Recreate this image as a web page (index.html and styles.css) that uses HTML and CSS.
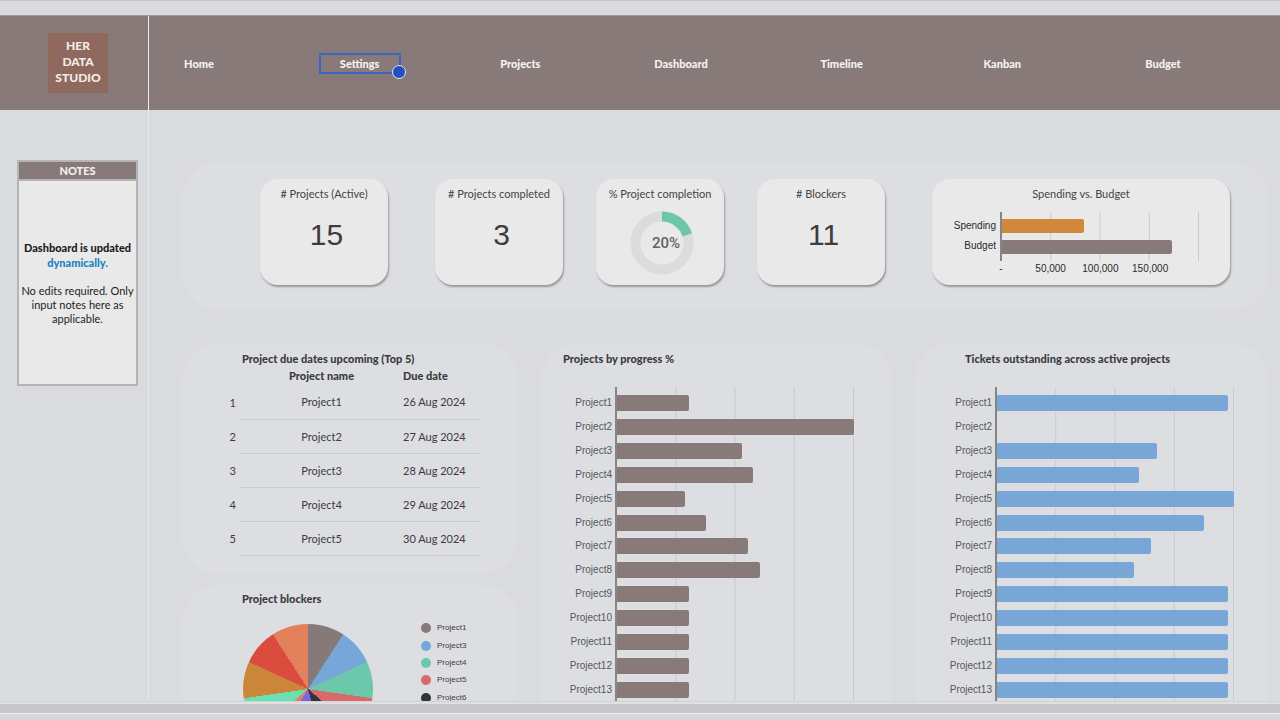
FILE: index.html
```html
<!DOCTYPE html>
<html lang="en">
<head>
<meta charset="utf-8">
<title>Project dashboard</title>
<meta name="viewport" content="width=device-width, initial-scale=1">
<link rel="stylesheet" href="styles.css">
</head>
<body>
<div class="sheet">
  <header class="header">
    <div class="brand"><div class="logo">HER<br>DATA<br>STUDIO</div></div>
    <nav class="nav">
      <a href="#">Home</a>
      <a href="#" class="selected">Settings</a>
      <a href="#">Projects</a>
      <a href="#">Dashboard</a>
      <a href="#">Timeline</a>
      <a href="#">Kanban</a>
      <a href="#">Budget</a>
    </nav>
  </header>
  <div class="page">
    <aside class="sidebar">
      <section class="notes">
        <h2 class="notes-title">NOTES</h2>
        <div class="notes-body">
          <p class="notes-lead">Dashboard is updated <span class="accent">dynamically.</span></p>
          <p>No edits required. Only input notes here as applicable.</p>
        </div>
      </section>
    </aside>
    <main class="content">
      <section class="panel kpis">
        <article class="card"><h3># Projects (Active)</h3><p class="figure">15</p></article>
        <article class="card spaced"><h3># Projects completed</h3><p class="figure">3</p></article>
        <article class="card">
          <h3>% Project completion</h3>
          <svg class="donut" viewBox="0 0 64 64" role="img" aria-label="20% complete">
            <circle cx="32" cy="32" r="26.5" fill="none" stroke="#dcdcdc" stroke-width="10"/>
            <circle cx="32" cy="32" r="26.5" fill="none" stroke="#6cc7a8" stroke-width="10" pathLength="100" stroke-dasharray="20 80" transform="rotate(-90 32 32)"/>
            <text x="36" y="37" text-anchor="middle" class="donut-label">20%</text>
          </svg>
        </article>
        <article class="card"><h3># Blockers</h3><p class="figure">11</p></article>
        <article class="card wide spaced">
          <h3>Spending vs. Budget</h3>
          <div class="spend">
            <div class="spend-labels"><span>Spending</span><span>Budget</span></div>
            <div class="spend-plot">
              <div class="bar ochre" style="width:41.4%"></div>
              <div class="bar" style="width:86.4%"></div>
            </div>
            <div class="spend-ticks"><span>-</span><span>50,000</span><span>100,000</span><span>150,000</span></div>
          </div>
        </article>
      </section>
      <div class="columns">
        <div class="stack">
          <section class="panel due">
            <h2 class="title">Project due dates upcoming (Top 5)</h2>
            <table class="due-table">
              <thead><tr><th class="num"></th><th class="name">Project name</th><th class="date">Due date</th></tr></thead>
              <tbody>
                <tr><td class="num">1</td><td class="name">Project1</td><td class="date">26 Aug 2024</td></tr>
                <tr><td class="num">2</td><td class="name">Project2</td><td class="date">27 Aug 2024</td></tr>
                <tr><td class="num">3</td><td class="name">Project3</td><td class="date">28 Aug 2024</td></tr>
                <tr><td class="num">4</td><td class="name">Project4</td><td class="date">29 Aug 2024</td></tr>
                <tr><td class="num">5</td><td class="name">Project5</td><td class="date">30 Aug 2024</td></tr>
              </tbody>
            </table>
          </section>
          <section class="panel blockers">
            <h2 class="title">Project blockers</h2>
            <div class="blockers-body">
              <div class="pie" role="img" aria-label="Blockers by project"></div>
              <ul class="legend">
                <li><i class="dot"></i>Project1</li>
                <li><i class="dot blue"></i>Project3</li>
                <li><i class="dot green"></i>Project4</li>
                <li><i class="dot red"></i>Project5</li>
                <li><i class="dot dark"></i>Project6</li>
              </ul>
            </div>
          </section>
        </div>
        <section class="panel progress">
          <h2 class="title">Projects by progress %</h2>
          <div class="chart">
            <div class="labels"><span>Project1</span><span>Project2</span><span>Project3</span><span>Project4</span><span>Project5</span><span>Project6</span><span>Project7</span><span>Project8</span><span>Project9</span><span>Project10</span><span>Project11</span><span>Project12</span><span>Project13</span></div>
            <div class="plot">
              <div class="bar" style="width:30.4%"></div>
              <div class="bar" style="width:100%"></div>
              <div class="bar" style="width:52.7%"></div>
              <div class="bar" style="width:57.4%"></div>
              <div class="bar" style="width:28.7%"></div>
              <div class="bar" style="width:37.6%"></div>
              <div class="bar" style="width:55.3%"></div>
              <div class="bar" style="width:60.3%"></div>
              <div class="bar" style="width:30.4%"></div>
              <div class="bar" style="width:30.4%"></div>
              <div class="bar" style="width:30.4%"></div>
              <div class="bar" style="width:30.4%"></div>
              <div class="bar" style="width:30.4%"></div>
            </div>
          </div>
        </section>
        <section class="panel tickets">
          <h2 class="title">Tickets outstanding across active projects</h2>
          <div class="chart">
            <div class="labels"><span>Project1</span><span>Project2</span><span>Project3</span><span>Project4</span><span>Project5</span><span>Project6</span><span>Project7</span><span>Project8</span><span>Project9</span><span>Project10</span><span>Project11</span><span>Project12</span><span>Project13</span></div>
            <div class="plot">
              <div class="bar" style="width:97.5%"></div>
              <div class="bar" style="width:0%"></div>
              <div class="bar" style="width:67.3%"></div>
              <div class="bar" style="width:60%"></div>
              <div class="bar" style="width:100%"></div>
              <div class="bar" style="width:87.4%"></div>
              <div class="bar" style="width:65%"></div>
              <div class="bar" style="width:57.6%"></div>
              <div class="bar" style="width:97.5%"></div>
              <div class="bar" style="width:97.5%"></div>
              <div class="bar" style="width:97.5%"></div>
              <div class="bar" style="width:97.5%"></div>
              <div class="bar" style="width:97.5%"></div>
            </div>
          </div>
        </section>
      </div>
    </main>
  </div>
</div>
<footer class="window-edge"></footer>
</body>
</html>
```
FILE: styles.css
```css
* { box-sizing: border-box; }
body {
  margin: 0;
  height: 100vh;
  display: flex;
  flex-direction: column;
  overflow: hidden;
  background: #dadbdf;
  color: #3b3b3d;
  font-family: Lato, "Liberation Sans", sans-serif;
  font-size: 11px;
  line-height: 15px;
}
h2, h3, p, ul { margin: 0; padding: 0; font-size: inherit; }
.sheet {
  flex: 1;
  min-height: 0;
  overflow: hidden;
  display: flex;
  flex-direction: column;
  border-top: 1px solid #c6c7ca;
  border-bottom: 1px solid #d0d1d4;
}
.header {
  flex: none;
  display: flex;
  height: 95px;
  margin-top: 14px;
  background: #877a79;
  border-top: 1px solid #a39a9a;
}
.brand {
  width: 149px;
  padding-left: 48px;
  display: flex;
  align-items: center;
  border-right: 1px solid #eeecec;
}
.logo {
  width: 60px;
  height: 60px;
  padding-top: 5px;
  background: #90695e;
  color: #f3ebe6;
  text-align: center;
  font-weight: 900;
  font-size: 12px;
  line-height: 16px;
}
.nav {
  flex: 1;
  display: flex;
  justify-content: space-between;
  align-items: center;
  padding: 0 76px 0 9px;
}
.nav a {
  width: 82px;
  border: 2px solid transparent;
  line-height: 17px;
  color: #f6f3f3;
  font-weight: 900;
  text-align: center;
  text-decoration: none;
}
.nav .selected { position: relative; border-color: #3b66c8; }
.nav .selected::after {
  content: "";
  position: absolute;
  right: -7px;
  bottom: -7px;
  width: 12px;
  height: 12px;
  border: 1px solid #dfe6f6;
  border-radius: 50%;
  background: #2450bd;
}
.page { flex: 1; min-height: 0; display: flex; }
.sidebar {
  flex: none;
  width: 149px;
  padding: 50px 10px 0 17px;
  border-right: 1px solid #e6e7ea;
}
.notes { border: 2px solid #b5b5b7; background: #e9e9e9; text-align: center; color: #1d1d1d; }
.notes-title {
  background: #877a79;
  color: #f3efef;
  border-bottom: 2px solid #b5b5b7;
  font-weight: 900;
  line-height: 17px;
}
.notes-body {
  min-height: 203px;
  display: flex;
  flex-direction: column;
  justify-content: center;
  gap: 14px;
}
.notes-body p { line-height: 14px; }
.notes-body .notes-lead { font-weight: 900; line-height: 15px; }
.accent { display: block; color: #1b83c2; }
.content { flex: 1; min-width: 0; padding: 53px 12px 0 34px; }
.panel { background: #dddee2; border-radius: 36px; box-shadow: 0 0 4px #dddee2; }
.kpis { display: flex; gap: 33px; padding: 16px 38px 24px 77px; margin-bottom: 35px; }
.card {
  flex: 128 1 0;
  min-width: 0;
  min-height: 106px;
  padding-top: 7px;
  display: flex;
  flex-direction: column;
  align-items: center;
  border-radius: 18px;
  background: #e9e9e9;
  box-shadow: 1px 2px 2px #98989b;
}
.card.wide { flex-grow: 298; }
.card.spaced { margin-left: 14px; }
.card h3 { font-weight: 400; color: #444; white-space: nowrap; }
.figure {
  margin-top: 16px;
  padding-left: 5px;
  font: 30px/36px "Liberation Sans", sans-serif;
  color: #3c3c3c;
}
.donut { width: 64px; height: 64px; margin-top: 10px; margin-left: 3px; }
.donut-label { font: 500 15px Roboto, sans-serif; fill: #616161; }
.spend {
  align-self: stretch;
  display: grid;
  grid-template-columns: 68px 1fr;
  margin: 11px 31px 0 0;
  font: 10px/20px "Liberation Sans", sans-serif;
  color: #2a2a2a;
}
.spend-labels { display: flex; flex-direction: column; padding: 4px 4px 0 0; text-align: right; }
.spend-plot {
  display: flex;
  flex-direction: column;
  gap: 7px;
  padding: 7px 0;
}
.spend-plot .bar { height: 14px; }
.spend-plot, .plot {
  border-left: 2px solid #858587;
  background: linear-gradient(to left, #c9cacd 1px, transparent 1px) 0 0 / 25% 100%;
}
.spend-ticks {
  grid-column: 2;
  display: grid;
  grid-template-columns: repeat(4, 1fr);
  margin-left: -24px;
  margin-right: 24px;
  line-height: 16px;
  text-align: center;
}
.bar { background: #877a79; border-radius: 0 2px 2px 0; }
.ochre { background: #d1883a; }
.columns {
  display: grid;
  grid-template-columns: 335fr 349fr 353fr;
  gap: 24px;
}
.title { font-weight: 900; white-space: nowrap; }
.stack { display: flex; flex-direction: column; gap: 13px; }
.due { padding: 7px 38px 17px 0; }
.due .title, .blockers .title { padding-left: 59px; }
.due-table { width: 100%; border-collapse: collapse; table-layout: fixed; }
.due-table th, .due-table td { padding: 0; }
.due-table th { height: 19px; font-weight: 900; line-height: 19px; }
.due-table td { height: 34px; border-bottom: 1px solid #cbccd0; }
.due-table .num { width: 57px; padding-right: 4px; text-align: right; border-bottom: 0; }
.due-table .date { width: 77px; text-align: left; }
.due-table .name { text-align: center; }
.blockers { padding: 5px 38px 0 0; }
.blockers-body { display: flex; gap: 48px; padding: 14px 0 0 60px; }
.pie {
  width: 130px;
  height: 130px;
  margin-top: 4px;
  border-radius: 50%;
  background: conic-gradient(
    #857979 0 32.73deg, #77a7d8 0 65.45deg, #6bc8aa 0 98.18deg,
    #d96a6b 0 130.91deg, #333438 0 163.64deg, #7d66dc 0 212deg,
    #e3815d 0 229.09deg, #69e0b3 0 261.82deg, #cc8639 0 294.55deg,
    #db4c3f 0 327.27deg, #e3815d 0 360deg);
}
.legend {
  list-style: none;
  height: 87px;
  display: grid;
  grid-auto-rows: 1fr;
  align-items: center;
  font: 8px/12px "Liberation Sans", sans-serif;
}
.legend li { display: flex; align-items: center; gap: 6px; }
.dot { width: 10px; height: 10px; border-radius: 50%; background: #857979; }
.dot.blue { background: #77a7d8; }
.dot.green { background: #6bc8aa; }
.dot.red { background: #d96a6b; }
.dot.dark { background: #333438; }
.progress { padding: 7px 37px 0 0; }
.progress .title { padding-left: 21px; }
.progress .chart { grid-template-columns: 73px 1fr; }
.tickets { padding: 7px 34px 0 0; }
.tickets .title { padding-left: 50px; }
.tickets .chart { grid-template-columns: 80px 1fr; }
.tickets .bar { background: #78a7d7; }
.chart { display: grid; height: 315px; margin-top: 21px; }
.labels, .plot { display: grid; grid-auto-rows: 1fr; align-items: center; padding-top: 4px; }
.labels {
  padding-right: 3px;
  text-align: right;
  font: 10px/16px "Liberation Sans", sans-serif;
  color: #55565a;
}
.plot .bar { height: 16px; }
.window-edge {
  flex: none;
  height: 18px;
  border-top: 2px solid #dfe0e2;
  background: linear-gradient(#c6c7ca 9px, #efeff0 9px, #efeff0 10px, #d6d7d9 10px);
}
```
